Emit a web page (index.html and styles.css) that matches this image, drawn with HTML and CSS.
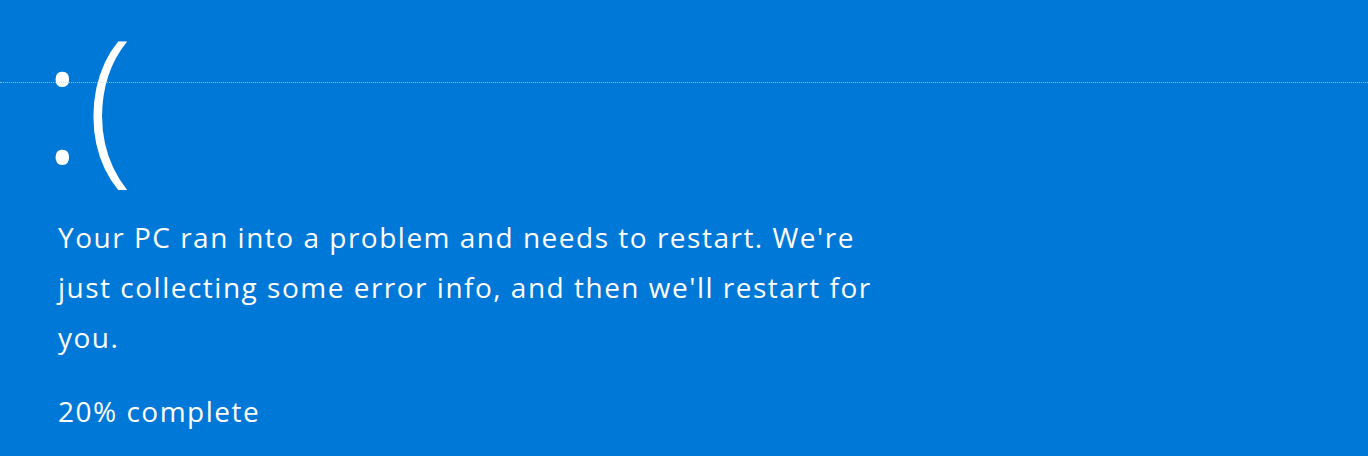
FILE: index.html
```html
<!DOCTYPE html>
<html lang="en">
<head>
<meta charset="utf-8">
<title>Your PC ran into a problem</title>
<link rel="stylesheet" href="styles.css">
</head>
<body>
<div class="guide"></div>
<main class="screen">
  <div class="frown">:(</div>
  <p class="message">Your PC ran into a problem and needs to restart. We're just collecting some error info, and then we'll restart for you.</p>
  <p class="progress">20% complete</p>
</main>
</body>
</html>
```
FILE: styles.css
```css
html, body {
  margin: 0;
  padding: 0;
  height: 100%;
}
body {
  background: #0078d7;
  color: #ffffff;
  font-family: "Open Sans", "Noto Sans", "Liberation Sans", sans-serif;
  overflow: hidden;
  position: relative;
}
.guide {
  position: absolute;
  left: 0;
  right: 0;
  top: 82px;
  border-top: 1px dotted rgba(205, 210, 215, 0.75);
  z-index: 2;
}
.screen {
  display: flex;
  flex-direction: column;
  align-items: flex-start;
  padding: 12px 0 0 58px;
}
.frown {
  margin-left: -16px;
  font-size: 170px;
  font-weight: 300;
  line-height: 1;
  height: 170px;
  letter-spacing: 4px;
}
.message {
  margin: 30px 0 0 0;
  width: 830px;
  font-size: 28px;
  font-weight: 400;
  line-height: 50px;
  letter-spacing: 1.5px;
}
.progress {
  margin: 24px 0 0 0;
  font-size: 28px;
  font-weight: 400;
  line-height: 50px;
  letter-spacing: 1.5px;
}
```
